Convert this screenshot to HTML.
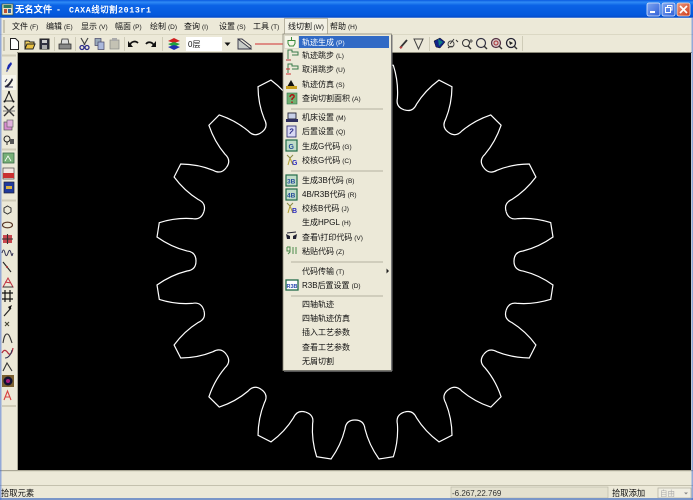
<!DOCTYPE html>
<html><head><meta charset="utf-8"><style>
html,body{margin:0;padding:0;width:693px;height:500px;overflow:hidden;background:#ece9d8}
svg{display:block;filter:blur(.35px)}
text{font-family:"Liberation Sans","WenQuanYi Zen Hei","Noto Sans CJK SC",sans-serif;font-size:8px;fill:#111}
.s{font-size:6.5px}
</style></head><body>
<svg width="693" height="500" viewBox="0 0 693 500" xmlns="http://www.w3.org/2000/svg">
<defs>
<linearGradient id="tb" x1="0" y1="0" x2="0" y2="1"><stop offset="0" stop-color="#0a5ae0"/><stop offset=".12" stop-color="#2f8af5"/><stop offset=".3" stop-color="#0a62e6"/><stop offset=".85" stop-color="#0458dc"/><stop offset="1" stop-color="#0346c0"/></linearGradient>
<linearGradient id="btn" x1="0" y1="0" x2="1" y2="1"><stop offset="0" stop-color="#7fa6f0"/><stop offset="1" stop-color="#2f5fd8"/></linearGradient>
<linearGradient id="cl" x1="0" y1="0" x2="1" y2="1"><stop offset="0" stop-color="#ec9a80"/><stop offset="1" stop-color="#cf3a18"/></linearGradient>
<path id="t" fill="none" stroke="#ffffff" stroke-width="1.200" d="M159,0 Q159,-9 168,-10 Q184,-14 198,-24 L195.7,-38.4 Q179.3,-43.6 163,-42.4 Q154,-40.5 151.2,-49.1"/>
</defs>
<rect width="693" height="500" fill="#ece9d8"/>
<!-- title bar -->
<rect width="693" height="18" fill="url(#tb)"/>
<rect x="2" y="4" width="11" height="11" fill="#e8e4c8" stroke="#305040" stroke-width=".7"/>
<rect x="3.5" y="5" width="8" height="3" fill="#2a7a60"/><rect x="4" y="9" width="3" height="4" fill="#c05030"/><rect x="8" y="9" width="3" height="4" fill="#3060a0"/>
<text x="15" y="12.5" style="font-size:9.3px;font-weight:bold;fill:#fff">无名文件</text>
<text x="57" y="12.5" style="font-size:9px;font-weight:bold;fill:#fff">-</text>
<text x="69" y="12.5" style="font-family:'Liberation Mono','WenQuanYi Zen Hei',monospace;font-size:8.3px;font-weight:bold;fill:#fff" textLength="82">CAXA线切割2013r1</text>
<rect x="647" y="3" width="13" height="13" rx="2" fill="url(#btn)" stroke="#dfe8fa" stroke-width=".8"/><rect x="650" y="11" width="5" height="2" fill="#fff"/>
<rect x="662" y="3" width="13" height="13" rx="2" fill="url(#btn)" stroke="#dfe8fa" stroke-width=".8"/><rect x="665.5" y="7.5" width="5" height="5" fill="none" stroke="#fff"/><path d="M667.5 7V5.5H672V10H671" fill="none" stroke="#fff"/>
<rect x="677" y="3" width="13" height="13" rx="2" fill="url(#cl)" stroke="#f0e0d8" stroke-width=".8"/><path d="M680 6l7 7M687 6l-7 7" stroke="#fff" stroke-width="1.7"/>
<rect y="17.5" width="693" height="1" fill="#fff" opacity=".5"/>
<!-- menubar text -->
<rect x="3" y="20" width="2" height="13" fill="#c8c4b0"/>
<g>
<text x="12" y="29">文件<tspan class="s" dx="2">(F)</tspan></text>
<text x="46" y="29">编辑<tspan class="s" dx="2">(E)</tspan></text>
<text x="81" y="29">显示<tspan class="s" dx="2">(V)</tspan></text>
<text x="115" y="29">幅面<tspan class="s" dx="2">(P)</tspan></text>
<text x="150" y="29">绘制<tspan class="s" dx="2">(D)</tspan></text>
<text x="184" y="29">查询<tspan class="s" dx="2">(I)</tspan></text>
<text x="219" y="29">设置<tspan class="s" dx="2">(S)</tspan></text>
<text x="253" y="29">工具<tspan class="s" dx="2">(T)</tspan></text>
<path d="M284.500 34V18.500H327.500V34" fill="#f2f0e4" stroke="#a8a490" stroke-width=".8"/>
<text x="288" y="29">线切割<tspan class="s" dx="1.500">(W)</tspan></text>
<text x="330" y="29">帮助<tspan class="s" dx="2">(H)</tspan></text>
</g>
<rect y="34" width="693" height=".7" fill="#d4d0bc"/>
<!-- toolbar -->
<rect x="3" y="37" width="2" height="14" fill="#c8c4b0"/>
<g fill="none" stroke="#222" stroke-width="1">
<path d="M10.500 38.500h5l3 3v8h-8z" fill="#fff"/>
<path d="M25 49v-8h4l1 1h4v2" fill="#f0d060"/><path d="M25 49l2-5h8l-2 5z" fill="#e8c040"/>
<rect x="40" y="39" width="9" height="10" fill="#303040"/><rect x="42" y="40" width="5" height="3" fill="#ccc" stroke="none"/><rect x="42" y="45" width="5" height="4" fill="#aaa" stroke="none"/>
</g>
<path d="M59 44h12v5H59z" fill="#888" stroke="#333" stroke-width=".8"/><path d="M61 44l1-5h6l1 5z" fill="#ddd" stroke="#333" stroke-width=".8"/>
<path d="M81 38l4 7M88 38l-4 7" stroke="#444" stroke-width="1.200"/><circle cx="82" cy="47.500" r="2" fill="none" stroke="#2a2a8a" stroke-width="1.300"/><circle cx="87" cy="47.500" r="2" fill="none" stroke="#2a2a8a" stroke-width="1.300"/>
<rect x="95" y="38.500" width="6" height="7" fill="#9ab" stroke="#446" stroke-width=".7"/><rect x="98" y="42" width="6" height="7.500" fill="#aab8dc" stroke="#446" stroke-width=".7"/>
<rect x="110" y="40" width="9" height="9" fill="#c4c2b4" stroke="#888" stroke-width=".7"/><rect x="112" y="38" width="5" height="3" fill="#aaa"/>
<path d="M131 46c0-4 5-6 8-3" stroke="#111" stroke-width="1.700" fill="none" transform="translate(-1,0)"/><path d="M128 41v6h5z" fill="#111"/>
<path d="M154 46c-1-4-6-5-8-2" stroke="#111" stroke-width="1.700" fill="none"/><path d="M156 41v6h-5z" fill="#111"/>
<g stroke="none"><path d="M168 41l6-3 6 3-6 2z" fill="#d02020"/><path d="M168 44l6-2 6 2-6 3z" fill="#20a040"/><path d="M168 47l6-2 6 2-6 3z" fill="#2030b0"/></g>
<rect x="186" y="37" width="47" height="14" fill="#fff"/><rect x="222" y="37" width="11" height="14" fill="#ece9d8"/>
<text x="188" y="47">0层</text><path d="M224.500 42.500h6l-3 3.500z" fill="#111"/>
<path d="M238 39l13 10H238z" fill="#c8ccc8" stroke="#334" stroke-width=".9"/><path d="M238 39h4l9 7v3" fill="none" stroke="#334" stroke-width=".9"/>
<rect x="255" y="43.500" width="28" height="1" fill="#d03030"/>
<g fill="none" stroke="#555"><path d="M400 48l7-8" stroke="#333" stroke-width="1.800"/><path d="M400 48l2-1" stroke="#c04040" stroke-width="2"/><path d="M414 39h9l-4.500 10z" stroke="#444"/></g>
<path d="M434 41l6-3 5 4-5 6-4-1z" fill="#128" stroke="#111" stroke-width=".5"/><path d="M438 39l5 3-4 4z" fill="#108080"/>
<path d="M448 48c2-2 4-2 5-1M454 39l-4 5M456 40l2 2" stroke="#333" fill="none"/><circle cx="451" cy="44" r="3" fill="none" stroke="#444"/>
<circle cx="466" cy="43" r="3.500" fill="none" stroke="#333"/><path d="M468 46l3 3" stroke="#333" stroke-width="1.400"/><path d="M471 39v4M469 41h4" stroke="#333" stroke-width=".8"/>
<circle cx="481" cy="43" r="4.500" fill="none" stroke="#334" stroke-width="1.200"/><path d="M484 46l3 3" stroke="#333" stroke-width="1.400"/>
<circle cx="496" cy="43" r="4.500" fill="#d8c8c8" stroke="#534" stroke-width="1.200"/><circle cx="496" cy="43" r="2" fill="none" stroke="#a33"/><path d="M499 46l3 3" stroke="#333" stroke-width="1.400"/>
<circle cx="511" cy="43" r="4.500" fill="none" stroke="#223" stroke-width="1.300"/><path d="M509 41l4 2-3 2z" fill="#222"/><path d="M514 46l3 3" stroke="#333" stroke-width="1.400"/>
<rect x="522" y="36" width="1" height="15" fill="#cfccb8"/>
<g fill="#cfccb8"><rect x="54" y="37" width="1" height="14"/><rect x="75" y="37" width="1" height="14"/><rect x="124" y="37" width="1" height="14"/><rect x="162" y="37" width="1" height="14"/><rect x="429" y="37" width="1" height="14"/></g>
<!-- left toolbar -->
<rect x="2" y="54.500" width="14" height="2" fill="#d0ccb8"/>
<g>
<path d="M6 71l2-6 3-3 1 2-2 3-3 5z" fill="#1a2bb0"/><path d="M6 71l1-2 1 1z" fill="#e0d040"/>
<rect x="2" y="75" width="14" height="15" fill="#f6f5ec"/><path d="M4 86c3 0 6-4 8-8l1 2c-2 3-3 6-6 7" fill="#223" /><path d="M5 82l2-3M5 87h8" stroke="#335" fill="none"/>
<path d="M9 92l4 9H5z" fill="none" stroke="#222" stroke-width="1.100"/><circle cx="9" cy="92" r="1" fill="#111"/><circle cx="4.500" cy="101.500" r="1" fill="#111"/><circle cx="13.500" cy="101.500" r="1" fill="#111"/>
<path d="M4 106l10 10M14 106L4 116" stroke="#333" stroke-width="1.400"/><path d="M3 111h12" stroke="#777"/>
<rect x="4" y="122" width="8" height="8" fill="#d88cd0" stroke="#555" stroke-width=".7"/><rect x="7" y="120" width="6" height="7" fill="#e0b0dc" stroke="#666" stroke-width=".7"/>
<circle cx="7" cy="139" r="3" fill="none" stroke="#222"/><path d="M7 142v3" stroke="#222"/><rect x="10" y="139" width="4" height="5" fill="#555"/>
<rect x="3" y="153" width="11" height="10" fill="#78b078" stroke="#3a6a4a" stroke-width=".8"/><path d="M5 161l3-5 3 5" fill="none" stroke="#fff" stroke-width=".8"/>
<rect x="3" y="168" width="11" height="11" fill="#f0e6e0" stroke="#444" stroke-width=".7"/><rect x="3" y="173" width="11" height="5" fill="#c83030"/>
<rect x="4" y="182" width="10" height="11" fill="#203a9c" stroke="#223" stroke-width=".7"/><rect x="6" y="186" width="6" height="3" fill="#d8b040"/>
<rect x="2" y="199.500" width="14" height="2" fill="#d0ccb8"/>
<path d="M7 204l3.500 2v4l-3.500 2-3.500-2v-4z" transform="translate(0.500,2)" fill="none" stroke="#333"/>
<ellipse cx="7.500" cy="225" rx="5" ry="2.800" fill="none" stroke="#532" stroke-width="1.100"/>
<rect x="3" y="235" width="9" height="8" fill="#c84850"/><path d="M7.500 234v10M2 239h11" stroke="#333" stroke-width="1.100"/>
<path d="M2 253c1-4 2-4 3 0s2 3 3 0 2-4 3 0 1 3 2 0" fill="none" stroke="#335"/>
<path d="M3 262l8 10" stroke="#222" stroke-width="1.100"/><circle cx="7" cy="267" r="1" fill="#a33"/>
<path d="M3 287l5-9 5 9zM5 282l6 1" fill="none" stroke="#c03040"/><path d="M3 287h10" stroke="#333"/>
<path d="M5 290v12M10 290v12M2 293h11M2 299h11" stroke="#111" stroke-width="1.200"/>
<path d="M4 316l7-8" stroke="#222" stroke-width="1.200"/><path d="M12 305l-4 2 2 3z" fill="#111"/>
<path d="M5 322l4 4M9 322l-4 4" stroke="#443" stroke-width="1.100"/>
<path d="M3 343c1-6 2-9 4-9s3 3 5 9" fill="none" stroke="#333" stroke-width="1.100"/>
<path d="M2 353c2-4 4-3 6 0s4 0 5-5" fill="none" stroke="#b03040" stroke-width="1.300"/><path d="M5 358c3 0 6-3 7-8" fill="none" stroke="#335"/>
<path d="M3 371l4-8 5 8" fill="none" stroke="#333" stroke-width="1.100"/>
<rect x="2" y="375" width="12" height="12" fill="#7a6030"/><circle cx="8" cy="381" r="4.500" fill="#101030"/><circle cx="8" cy="381" r="2" fill="#a81878"/>
<path d="M4 400l3.500-9 3.500 9M5 397h5" fill="none" stroke="#d84040" stroke-width="1.100"/>
<rect x="2" y="405" width="14" height="2" fill="#d0ccb8"/>
<rect x="2" y="148.500" width="14" height="2" fill="#d0ccb8"/>
</g>
<!-- canvas -->
<rect x="18" y="53" width="673" height="417" fill="#000"/>
<rect x="17" y="52" width="675" height="1" fill="#8a8878"/>
<rect x="17" y="53" width="1" height="417" fill="#aaa898"/>
<g transform="translate(355,261)">
<use href="#t"/><use href="#t" transform="rotate(18)"/><use href="#t" transform="rotate(36)"/><use href="#t" transform="rotate(54)"/><use href="#t" transform="rotate(72)"/><use href="#t" transform="rotate(90)"/><use href="#t" transform="rotate(108)"/><use href="#t" transform="rotate(126)"/><use href="#t" transform="rotate(144)"/><use href="#t" transform="rotate(162)"/><use href="#t" transform="rotate(180)"/><use href="#t" transform="rotate(198)"/><use href="#t" transform="rotate(216)"/><use href="#t" transform="rotate(234)"/><use href="#t" transform="rotate(252)"/><use href="#t" transform="rotate(270)"/><use href="#t" transform="rotate(288)"/><use href="#t" transform="rotate(306)"/><use href="#t" transform="rotate(324)"/><use href="#t" transform="rotate(342)"/>
</g>
<!-- bottom bars -->
<rect y="470" width="693" height="30" fill="#ece9d8"/>
<rect y="470" width="693" height="1.200" fill="#a8a594"/>
<rect y="485" width="693" height="1" fill="#c4c1ae"/>
<text x="1" y="496" style="font-size:8.300px">拾取元素</text>
<rect x="451" y="487" width="157" height="11" fill="#e4e1cf" stroke="#b8b5a2" stroke-width=".6"/>
<text x="452" y="496" style="font-size:8px;fill:#333">-6.267,22.769</text>
<text x="612" y="496" style="font-size:8.300px">拾取添加</text>
<rect x="658" y="488" width="33" height="10" fill="#f0eee2" stroke="#b0ae9e" stroke-width=".7"/>
<text x="660" y="496" style="font-size:7.500px;fill:#aaa">自由</text><path d="M684 492.500h4l-2 2z" fill="#888"/>
<rect y="498" width="693" height="2" fill="#7a96c8"/>
<rect x="0" y="18" width="1.500" height="482" fill="#3a6ad8" opacity=".5"/>
<rect x="691.500" y="18" width="1.500" height="482" fill="#3a6ad8" opacity=".5"/>
<!-- menu -->
<rect x="283" y="34" width="108.500" height="336.500" fill="#ece9d8" stroke="#8a8878" stroke-width=".8"/>
<rect x="299" y="36" width="90" height="12" fill="#316ac5"/>
<rect x="284" y="370.500" width="108" height="1.500" fill="#555"/>
<rect x="391" y="35" width="1.500" height="336" fill="#777"/>
<g>
<text x="302" y="45" style="fill:#fff">轨迹生成<tspan class="s" dx="2" style="fill:#fff">(P)</tspan></text>
<text x="302" y="58">轨迹跳步<tspan class="s" dx="2">(L)</tspan></text>
<text x="302" y="72">取消跳步<tspan class="s" dx="2">(U)</tspan></text>
<text x="302" y="87">轨迹仿真<tspan class="s" dx="2">(S)</tspan></text>
<text x="302" y="101">查询切割面积<tspan class="s" dx="2">(A)</tspan></text>
<text x="302" y="120">机床设置<tspan class="s" dx="2">(M)</tspan></text>
<text x="302" y="134">后置设置<tspan class="s" dx="2">(Q)</tspan></text>
<text x="302" y="149">生成G代码<tspan class="s" dx="2">(G)</tspan></text>
<text x="302" y="163">校核G代码<tspan class="s" dx="2">(C)</tspan></text>
<text x="302" y="183">生成3B代码<tspan class="s" dx="2">(B)</tspan></text>
<text x="302" y="197">4B/R3B代码<tspan class="s" dx="2">(R)</tspan></text>
<text x="302" y="211">校核B代码<tspan class="s" dx="2">(J)</tspan></text>
<text x="302" y="225">生成HPGL<tspan class="s" dx="2">(H)</tspan></text>
<text x="302" y="240">查看\打印代码<tspan class="s" dx="2">(V)</tspan></text>
<text x="302" y="254">粘贴代码<tspan class="s" dx="2">(Z)</tspan></text>
<text x="302" y="274">代码传输<tspan class="s" dx="2">(T)</tspan></text>
<text x="302" y="288">R3B后置设置<tspan class="s" dx="2">(D)</tspan></text>
<text x="302" y="307">四轴轨迹</text>
<text x="302" y="321">四轴轨迹仿真</text>
<text x="302" y="335">插入工艺参数</text>
<text x="302" y="350">查看工艺参数</text>
<text x="302" y="364">无屑切割</text>
</g>
<g fill="#b4b1a0"><rect x="291" y="108.500" width="92" height="1"/><rect x="291" y="170.500" width="92" height="1"/><rect x="291" y="261.500" width="92" height="1"/><rect x="291" y="295.500" width="92" height="1"/></g>
<path d="M386.500 268.500l2.500 2.500-2.500 2.500z" fill="#222"/>
<!-- menu icons -->
<rect x="284.500" y="35.500" width="14" height="13" fill="#f6f5ea" stroke="#c8c5b4" stroke-width=".5"/>
<path d="M288 40.500h7v3l-1.500 2.500h-4L288 43.500zM291.500 37v3.500" fill="none" stroke="#3a8a3a"/>
<path d="M288 59v-9h4v2h6v3h-6" fill="none" stroke="#3a7a4a"/><path d="M286 60h5" stroke="#a33"/>
<path d="M288 73v-9h4v2h6v3h-6" fill="none" stroke="#3a7a4a"/><path d="M286 69h4M286 74h5" stroke="#c33"/>
<path d="M287 87l4-7 4 7z" fill="#111"/><rect x="286" y="86" width="11" height="3" fill="#c8a020"/>
<rect x="287" y="93" width="10" height="11" fill="#70b070" stroke="#375" stroke-width=".6"/><path d="M290 97c0-3 5-3 4 0l-2 2v1M292 101.500v1.500" fill="none" stroke="#b01010" stroke-width="1.400"/>
<rect x="288" y="113" width="8" height="6" fill="#c8d0e8" stroke="#223" stroke-width=".9"/><rect x="286" y="119" width="12" height="3" fill="#303060"/>
<rect x="287" y="126" width="9" height="11" fill="#d8d8f4" stroke="#337" stroke-width=".9"/><path d="M290 130c1-2 3-1 3 0s-3 2-3 4" fill="none" stroke="#338"/>
<rect x="286" y="140" width="11" height="11" fill="#c0dcc8" stroke="#206a48" stroke-width="1.200"/><text x="288.500" y="149" style="font-size:7px;font-weight:bold;fill:#234a9a">G</text>
<path d="M287 155l3 3 3-3" fill="none" stroke="#884"/><path d="M290 158l-2 7M290 158l3 7" stroke="#b0a030" fill="none"/><text x="292" y="165" style="font-size:7px;font-weight:bold;fill:#2a2ac0">G</text>
<rect x="286" y="175" width="11" height="11" fill="#c0dcc8" stroke="#206a48" stroke-width="1.200"/><text x="287" y="183.500" style="font-size:6.500px;font-weight:bold;fill:#234a9a">3B</text>
<rect x="286" y="189" width="11" height="11" fill="#c0dcc8" stroke="#206a48" stroke-width="1.200"/><text x="287" y="197.500" style="font-size:6.500px;font-weight:bold;fill:#234a9a">4B</text>
<path d="M287 203l3 3 3-3" fill="none" stroke="#884"/><path d="M290 206l-2 7M290 206l3 7" stroke="#b0a030" fill="none"/><text x="292" y="213" style="font-size:7px;font-weight:bold;fill:#2a2ac0">B</text>
<path d="M286 234l4 2v3h-3zM297 234l-4 2v3h3z" fill="#223"/><path d="M287 233l9-1" stroke="#223"/>
<path d="M287 247h3v5l-2 2M287 247v4h3M293 247v7M296 247v7" fill="none" stroke="#4a8a4a"/>
<rect x="286" y="280" width="12" height="10" fill="#fff" stroke="#206a48" stroke-width="1.300"/><text x="286.500" y="288" style="font-size:5.500px;font-weight:bold;fill:#2a4ab0">R3B</text>
</svg>
</body></html>
